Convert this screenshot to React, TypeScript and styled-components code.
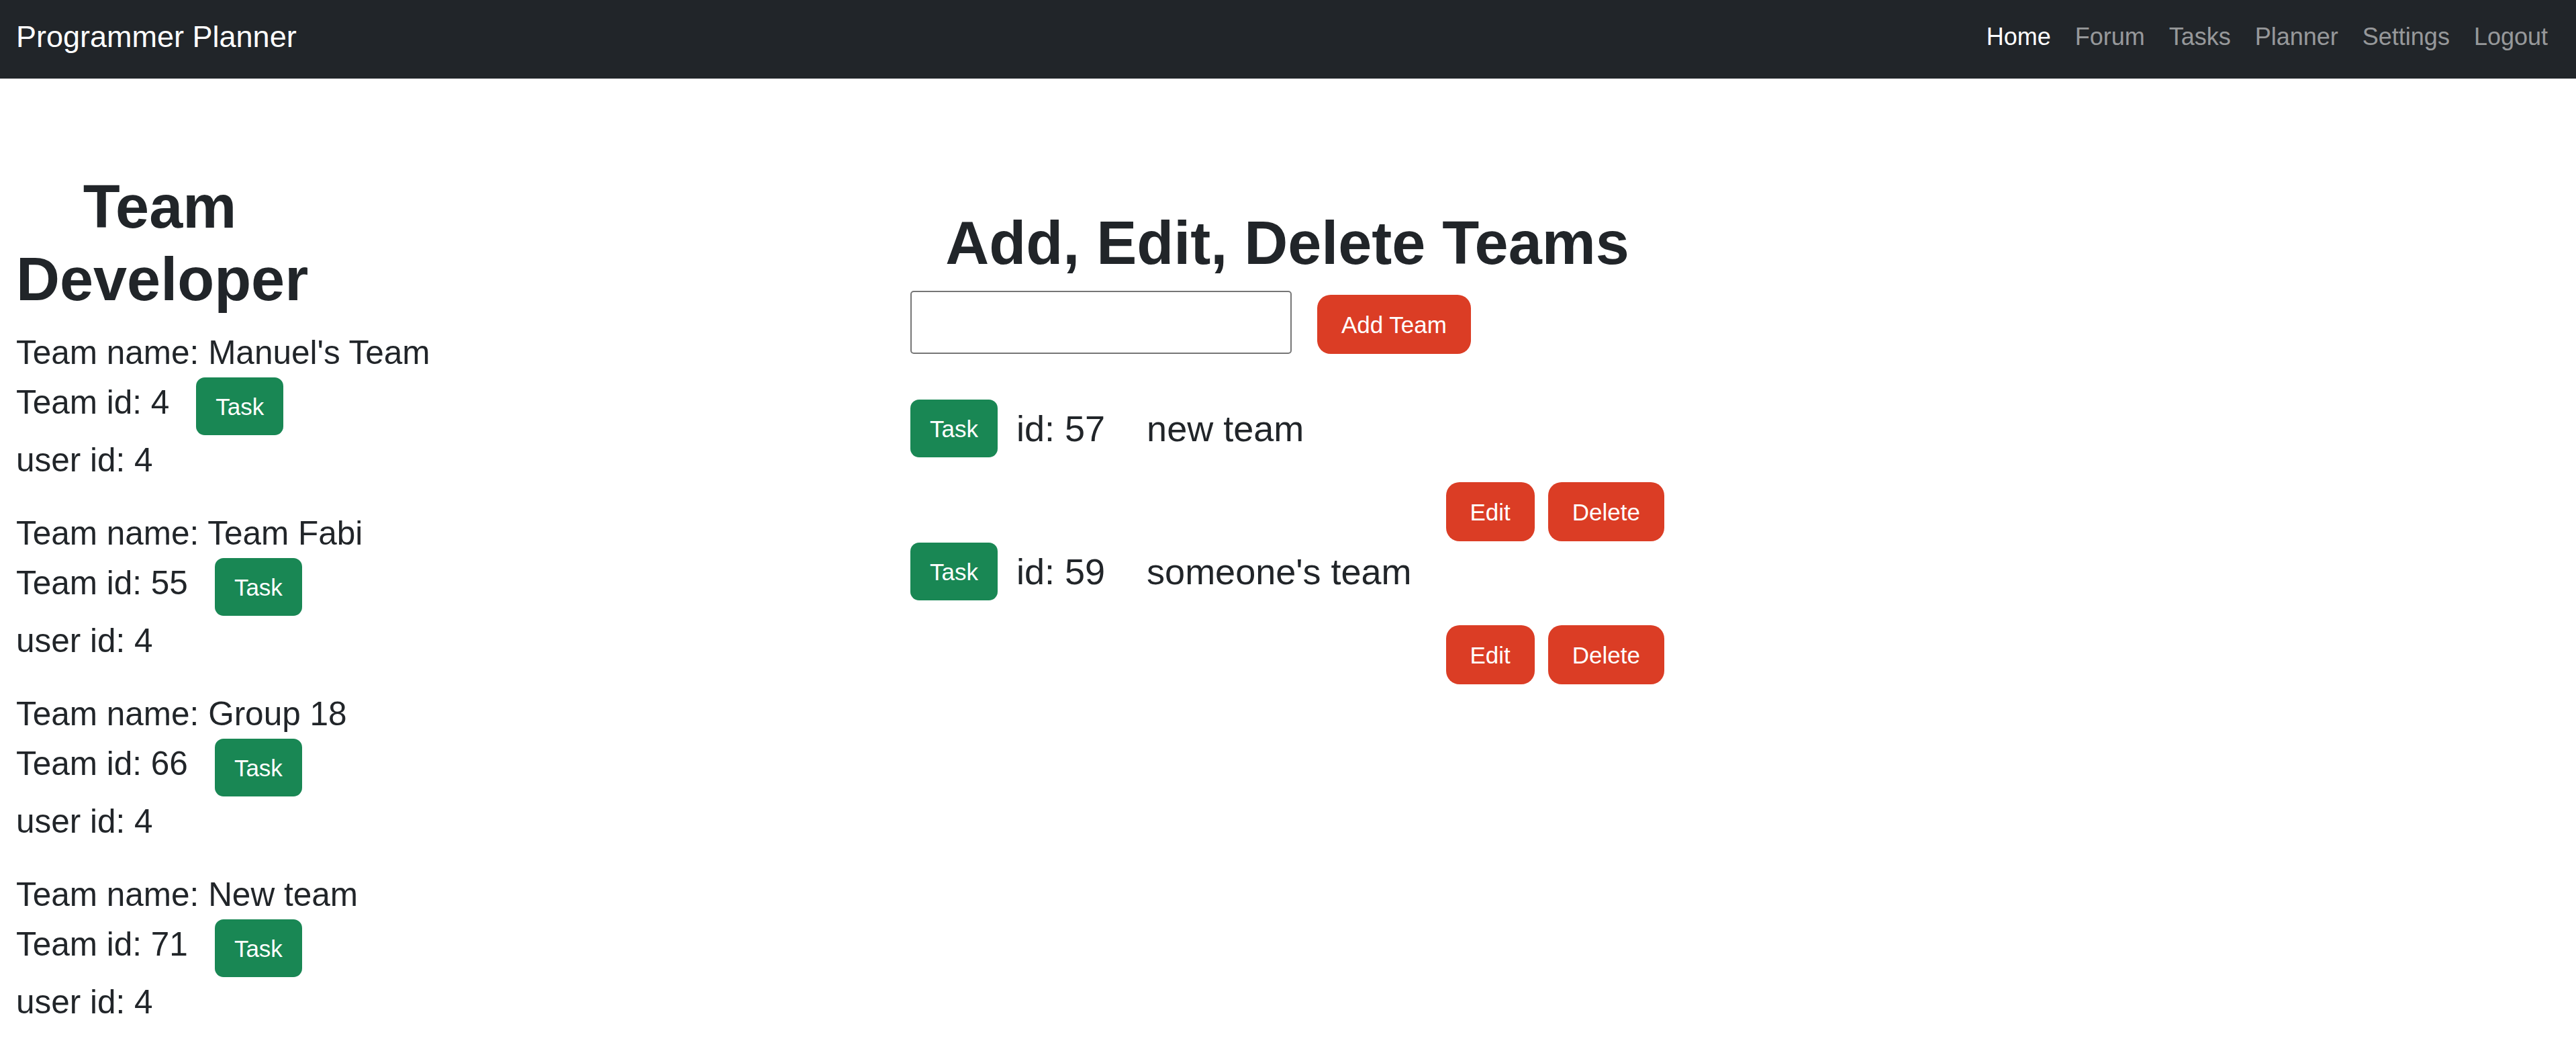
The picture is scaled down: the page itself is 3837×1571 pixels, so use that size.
import React from "react";
import styled, { createGlobalStyle } from "styled-components";

const GlobalStyle = createGlobalStyle`
  html, body {
    margin: 0;
    padding: 0;
    background: #ffffff;
  }
  body {
    font-family: "Liberation Sans", Arial, sans-serif;
    color: #212529;
  }
  * { box-sizing: border-box; }
`;

const Navbar = styled.nav`
  display: flex;
  justify-content: space-between;
  align-items: center;
  height: 117px;
  padding: 0 24px 8px 24px;
  background: #212529;
`;

const Brand = styled.a`
  font-size: 45px;
  line-height: 1.5;
  color: #ffffff;
  text-decoration: none;
  white-space: nowrap;
`;

const NavList = styled.ul`
  display: flex;
  list-style: none;
  margin: 0;
  padding: 0;
`;

const NavLink = styled.a<{ $active?: boolean }>`
  display: block;
  padding: 0 18px;
  font-size: 36px;
  line-height: 1.5;
  text-decoration: none;
  color: ${(p) => (p.$active ? "#ffffff" : "rgba(255, 255, 255, 0.55)")};
`;

const Main = styled.main`
  display: grid;
  grid-template-columns: 1332px 1123px;
  align-items: start;
  padding: 137px 0 0 24px;
`;

const LeftColumn = styled.section`
  display: flex;
  flex-direction: column;
`;

const Heading = styled.h1<{ $width?: string }>`
  width: ${(p) => p.$width ?? "auto"};
  margin: 0 0 18px 0;
  font-size: 90px;
  line-height: 1.2;
  font-weight: 700;
  text-align: center;
  color: #212529;
`;

const TeamBlock = styled.div`
  margin-bottom: 34.5px;
`;

const InfoLine = styled.p`
  margin: 0;
  font-size: 49.5px;
  line-height: 1.5;
  white-space: nowrap;
`;

const IdRow = styled.div`
  display: flex;
  align-items: flex-start;
`;

const IdText = styled.span`
  font-size: 49.5px;
  line-height: 1.5;
  white-space: nowrap;
`;

const TaskButton = styled.button<{ $offset?: number }>`
  height: 86px;
  padding: 0 29px;
  margin-left: ${(p) => p.$offset ?? 0}px;
  border: none;
  border-radius: 13px;
  background: #198754;
  color: #ffffff;
  font-family: inherit;
  font-size: 35px;
  line-height: 1;
  flex-shrink: 0;
`;

const RightColumn = styled.section`
  display: flex;
  flex-direction: column;
  margin-top: 54px;
`;

const AddRow = styled.div`
  display: flex;
  align-items: flex-end;
  gap: 38px;
  margin-top: -1px;
`;

const TeamInput = styled.input`
  width: 568px;
  height: 94px;
  border: 2px solid #767676;
  border-radius: 5px;
  background: #ffffff;
  font-family: inherit;
  font-size: 36px;
  padding: 0 8px;
`;

const RedButton = styled.button`
  height: 88px;
  padding: 0 36px;
  border: none;
  border-radius: 20px;
  background: #db3d25;
  color: #ffffff;
  font-family: inherit;
  font-size: 35px;
  line-height: 1;
  white-space: nowrap;
`;

const TeamList = styled.div`
  display: flex;
  flex-direction: column;
  margin-top: 68px;
`;

const TeamItem = styled.div`
  display: flex;
  flex-direction: column;
  margin-bottom: 2px;
`;

const ItemRow = styled.div`
  display: flex;
  align-items: center;
  height: 86px;
`;

const ItemText = styled.span<{ $gap: number }>`
  margin-left: ${(p) => p.$gap}px;
  font-size: 54px;
  line-height: 1.5;
  white-space: nowrap;
`;

const Actions = styled.div`
  display: flex;
  justify-content: flex-end;
  gap: 20px;
  margin-top: 37px;
`;

const devTeams = [
  { name: "Manuel's Team", id: 4, user: 4 },
  { name: "Team Fabi", id: 55, user: 4 },
  { name: "Group 18", id: 66, user: 4 },
  { name: "New team", id: 71, user: 4 },
];

const managedTeams = [
  { id: 57, name: "new team" },
  { id: 59, name: "someone's team" },
];

const links = ["Home", "Forum", "Tasks", "Planner", "Settings", "Logout"];

export default function App() {
  return (
    <>
      <GlobalStyle />
      <Navbar>
        <Brand href="#">Programmer Planner</Brand>
        <NavList>
          {links.map((l) => (
            <li key={l}>
              <NavLink href="#" $active={l === "Home"}>
                {l}
              </NavLink>
            </li>
          ))}
        </NavList>
      </Navbar>
      <Main>
        <LeftColumn>
          <Heading $width="428px">Team Developer</Heading>
          {devTeams.map((t) => (
            <TeamBlock key={t.id}>
              <InfoLine>Team name: {t.name}</InfoLine>
              <IdRow>
                <IdText>Team id: {t.id}</IdText>
                <TaskButton $offset={40}>Task</TaskButton>
              </IdRow>
              <InfoLine>user id: {t.user}</InfoLine>
            </TeamBlock>
          ))}
        </LeftColumn>
        <RightColumn>
          <Heading>Add, Edit, Delete Teams</Heading>
          <AddRow>
            <TeamInput type="text" />
            <RedButton>Add Team</RedButton>
          </AddRow>
          <TeamList>
            {managedTeams.map((t) => (
              <TeamItem key={t.id}>
                <ItemRow>
                  <TaskButton>Task</TaskButton>
                  <ItemText $gap={28}>id: {t.id}</ItemText>
                  <ItemText $gap={62}>{t.name}</ItemText>
                </ItemRow>
                <Actions>
                  <RedButton>Edit</RedButton>
                  <RedButton>Delete</RedButton>
                </Actions>
              </TeamItem>
            ))}
          </TeamList>
        </RightColumn>
      </Main>
    </>
  );
}
